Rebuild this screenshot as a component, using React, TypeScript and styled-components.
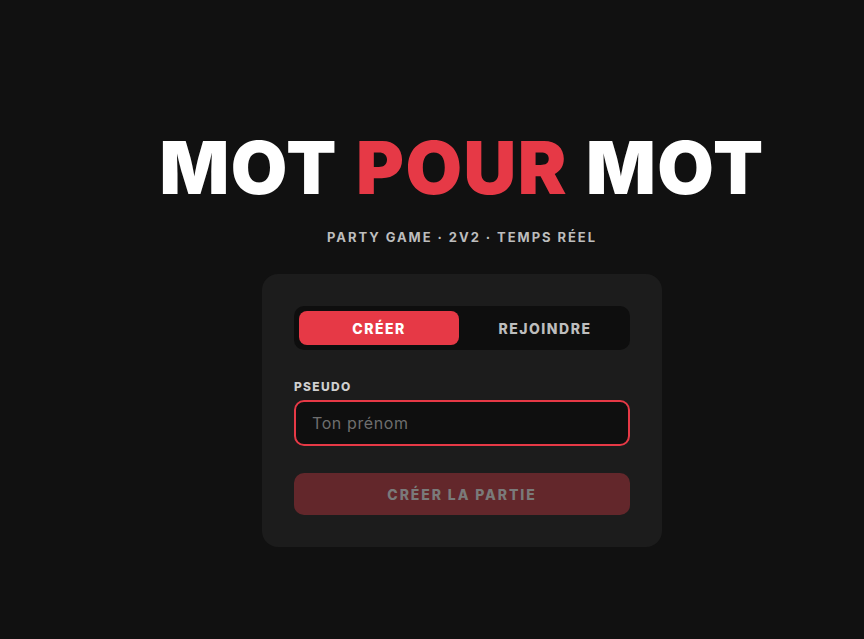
import styled, { createGlobalStyle } from "styled-components";

const accent = "#e63946";

const GlobalStyle = createGlobalStyle`
  html, body {
    margin: 0;
    padding: 0;
    background: #111111;
    color: #ffffff;
    font-family: Inter, "Noto Sans", sans-serif;
  }
  * { box-sizing: border-box; }
`;

const Page = styled.main`
  min-height: 639px;
  padding: 128px 0 0 60px;
  display: flex;
  flex-direction: column;
  align-items: center;
`;

const Title = styled.h1`
  margin: 0;
  font-size: 73px;
  line-height: 80px;
  font-weight: 900;
  letter-spacing: 1.5px;
  word-spacing: 2px;
  white-space: nowrap;
`;

const Accent = styled.span`
  color: ${accent};
`;

const Subtitle = styled.p`
  margin: 21px 0 29px;
  font-size: 13px;
  font-weight: 700;
  letter-spacing: 1.95px;
  color: #bdbdbd;
`;

const Card = styled.section`
  width: 400px;
  padding: 32px;
  background: #1c1c1c;
  border-radius: 16px;
  display: flex;
  flex-direction: column;
`;

const Tabs = styled.div`
  display: grid;
  grid-template-columns: 1fr 1fr;
  gap: 6px;
  padding: 5px;
  background: #0e0e0e;
  border-radius: 10px;
`;

const Tab = styled.button<{ $active?: boolean }>`
  height: 34px;
  border: none;
  border-radius: 8px;
  font-family: inherit;
  font-size: 14px;
  font-weight: 800;
  letter-spacing: 1.5px;
  cursor: pointer;
  background: ${(p) => (p.$active ? accent : "transparent")};
  color: ${(p) => (p.$active ? "#ffffff" : "#bdbdbd")};
`;

const Label = styled.label`
  margin: 29px 0 6px;
  font-size: 12px;
  font-weight: 800;
  letter-spacing: 1.3px;
  color: #cfcfcf;
`;

const Input = styled.input`
  height: 46px;
  padding: 0 16px;
  background: #0f0f0f;
  border: 2px solid ${accent};
  border-radius: 10px;
  color: #ffffff;
  font-family: inherit;
  font-size: 16px;
  letter-spacing: 0.6px;
  outline: none;
  &::placeholder {
    color: #6e6e6e;
  }
`;

const Submit = styled.button`
  margin-top: 27px;
  height: 42px;
  border: none;
  border-radius: 10px;
  background: #63272b;
  color: #7a7a7a;
  font-family: inherit;
  font-size: 14px;
  font-weight: 800;
  letter-spacing: 1.9px;
`;

export default function App() {
  return (
    <>
      <GlobalStyle />
      <Page>
        <Title>
          MOT <Accent>POUR</Accent> MOT
        </Title>
        <Subtitle>PARTY GAME · 2V2 · TEMPS RÉEL</Subtitle>
        <Card>
          <Tabs>
            <Tab $active>CRÉER</Tab>
            <Tab>REJOINDRE</Tab>
          </Tabs>
          <Label htmlFor="pseudo">PSEUDO</Label>
          <Input id="pseudo" placeholder="Ton prénom" />
          <Submit disabled>CRÉER LA PARTIE</Submit>
        </Card>
      </Page>
    </>
  );
}
